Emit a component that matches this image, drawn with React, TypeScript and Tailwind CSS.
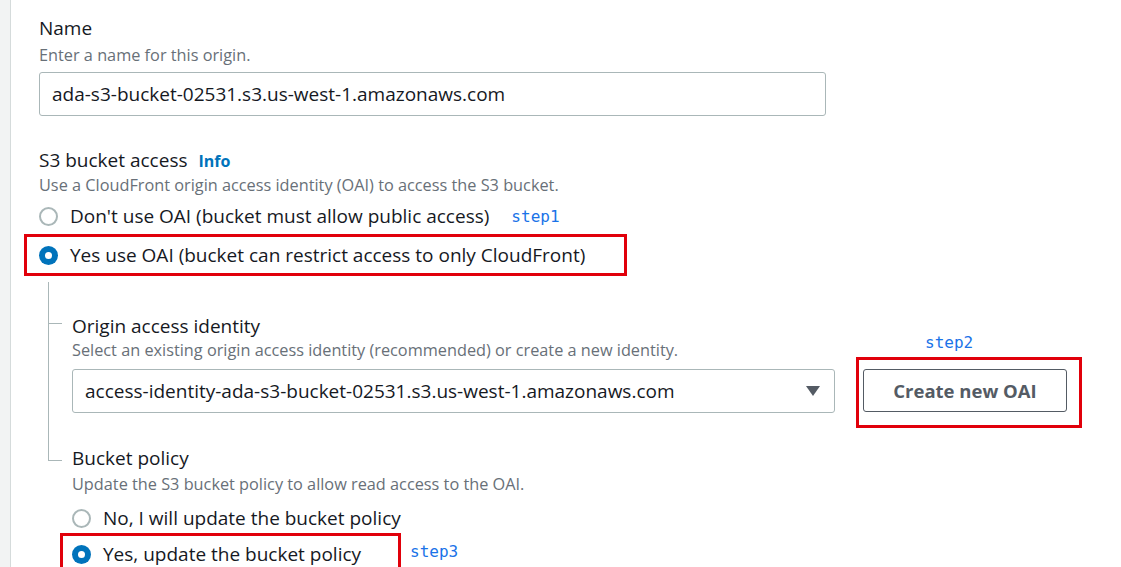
function Radio({ checked }: { checked?: boolean }) {
  return checked ? (
    <span className="flex h-[19px] w-[19px] shrink-0 items-center justify-center rounded-full bg-[#0073bb]">
      <span className="h-[7px] w-[7px] rounded-full bg-white" />
    </span>
  ) : (
    <span className="h-[19px] w-[19px] shrink-0 rounded-full border-2 border-[#aab7b8] bg-white" />
  )
}

function Step({ label }: { label: string }) {
  return (
    <span className="text-[16px] leading-[19px] text-[#1a73e8] [font-family:'DejaVu_Sans_Mono',monospace]">{label}</span>
  )
}

export default function App() {
  return (
    <div className="flex h-[567px] w-[1121px] overflow-hidden bg-white text-[#16191f] [font-family:'Open_Sans',sans-serif]">
      <div className="w-[11px] shrink-0 border-r border-[#d5dbdb] bg-[#f2f3f3]" />

      <div className="flex-1 pl-[28px] pt-[16px]">
        {/* Name */}
        <div className="text-[19px] leading-[24px]">Name</div>
        <div className="mt-[5px] text-[16.3px] leading-[20px] text-[#687078]">Enter a name for this origin.</div>
        <div className="mt-[7px] flex h-[44px] w-[787px] items-center rounded-[3px] border border-[#aab7b8] px-[12px] text-[19px]">
          ada-s3-bucket-02531.s3.us-west-1.amazonaws.com
        </div>

        {/* S3 bucket access */}
        <div className="mt-[32px] flex items-baseline gap-[11px] text-[19px] leading-[24px]">
          S3 bucket access
          <span className="text-[16px] font-bold text-[#0073bb]">Info</span>
        </div>
        <div className="mt-[2px] text-[16.3px] leading-[20px] text-[#687078]">
          Use a CloudFront origin access identity (OAI) to access the S3 bucket.
        </div>

        <div className="mt-[11px] flex h-[20px] items-center gap-[12px] text-[19px]">
          <Radio />
          <span>Don't use OAI (bucket must allow public access)</span>
          <span className="ml-[10px] -mt-[2px]">
            <Step label="step1" />
          </span>
        </div>

        <div className="-ml-[15px] mt-[8px] flex h-[42px] w-[603px] items-center gap-[12px] border-[3px] border-[#e1000a] pl-[12px] text-[19px]">
          <Radio checked />
          <span>Yes use OAI (bucket can restrict access to only CloudFront)</span>
        </div>

        {/* Nested tree */}
        <div className="ml-[9px] mt-[6px]">
          <div className="relative pl-[24px] pt-[32px]">
            <span className="absolute bottom-0 left-0 top-0 w-px bg-[#aab7b8]" />
            <span className="absolute left-0 top-[41px] h-px w-[14px] bg-[#aab7b8]" />
            <div className="text-[19px] leading-[24px]">Origin access identity</div>
            <div className="mt-[2px] text-[16.3px] leading-[20px] text-[#687078]">
              Select an existing origin access identity (recommended) or create a new identity.
            </div>
            <div className="mt-[9px] flex items-start">
              <div className="flex h-[44px] w-[763px] items-center justify-between rounded-[3px] border border-[#aab7b8] pl-[12px] pr-[14px] text-[19px]">
                <span>access-identity-ada-s3-bucket-02531.s3.us-west-1.amazonaws.com</span>
                <svg width="14" height="10" viewBox="0 0 14 10">
                  <path d="M0 0h14L7 10z" fill="#545b64" />
                </svg>
              </div>
              <div className="relative -mb-[15px] -mt-[12px] ml-[21px] border-[3px] border-[#e1000a] pb-[13px] pl-[4px] pr-[12px] pt-[9px]">
                <span className="absolute -top-[30px] left-[66px]">
                  <Step label="step2" />
                </span>
                <button className="flex h-[43px] w-[204px] items-center justify-center rounded-[3px] border border-[#545b64] text-[18.5px] font-bold text-[#545b64]">
                  Create new OAI
                </button>
              </div>
            </div>
            <div className="h-[33px]" />
          </div>

          <div className="relative pl-[24px]">
            <span className="absolute left-0 top-0 h-[14px] w-px bg-[#aab7b8]" />
            <span className="absolute left-0 top-[14px] h-px w-[14px] bg-[#aab7b8]" />
            <div className="text-[19px] leading-[24px]">Bucket policy</div>
            <div className="mt-[4px] text-[16.3px] leading-[20px] text-[#687078]">
              Update the S3 bucket policy to allow read access to the OAI.
            </div>
            <div className="mt-[14px] flex h-[20px] items-center gap-[12px] text-[19px]">
              <Radio />
              <span>No, I will update the bucket policy</span>
            </div>
            <div className="mt-[5px] flex items-center">
              <div className="-ml-[12px] flex h-[42px] w-[341px] items-center gap-[12px] border-[3px] border-[#e1000a] pl-[9px] text-[19px]">
                <Radio checked />
                <span>Yes, update the bucket policy</span>
              </div>
              <span className="ml-[9px] -mt-[6px]">
                <Step label="step3" />
              </span>
            </div>
          </div>
        </div>
      </div>
    </div>
  )
}
